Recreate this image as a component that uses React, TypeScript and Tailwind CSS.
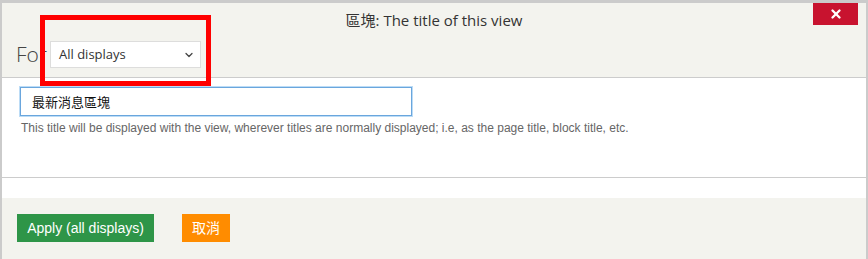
import { ChevronDown, X } from 'lucide-react'

// Views UI "title" override dialog
export default function App() {
  return (
    <div className="w-[868px] h-[259px] bg-[#cbcbcb] pt-[3px] pl-[2px] pr-[2px] overflow-hidden font-['Open_Sans',sans-serif]">
      <div className="relative h-full flex flex-col bg-white">
        {/* Header */}
        <div className="h-[75px] bg-[#f3f3ee] border-b border-[#cccccc] flex flex-col">
          <div className="h-[34px] grid grid-cols-[1fr_auto_1fr] items-start">
            <div />
            <h1 className="mt-[7px] leading-[20px] text-[15px] text-[#333333] font-['Open_Sans','Noto_Sans_CJK_TC',sans-serif]">
              區塊: The title of this view
            </h1>
            <div className="flex justify-end pr-[8px]">
              <button className="w-[45px] h-[22px] bg-[#c8132f] flex items-center justify-center text-white">
                <X size={14} strokeWidth={4} />
              </button>
            </div>
          </div>
          <div className="h-[40px] flex items-start pl-[14px] pt-[4px]">
            <span className="text-[21px] leading-[27px] font-light text-[#444444] w-[34px] overflow-hidden whitespace-nowrap">
              For
            </span>
            <div className="w-[151px] h-[27px] bg-white border border-[#dddddc] flex items-center justify-between pl-[8px] pr-[5px]">
              <span className="text-[13px] text-[#333333]">All displays</span>
              <ChevronDown size={12} strokeWidth={2.5} className="text-[#444444]" />
            </div>
          </div>
        </div>

        {/* Body */}
        <div className="h-[100px] px-[18px] pt-[9px] border-b border-[#cccccc] font-['Liberation_Sans',Arial,sans-serif]">
          <input
            readOnly
            value="最新消息區塊"
            className="w-[392px] h-[29px] pl-[11px] pr-[10px] border border-[#6aa6dd] shadow-[0_0_0_1px_#bcdcf6] text-[13px] text-[#111111] outline-none font-['Liberation_Sans','Noto_Sans_CJK_TC',sans-serif]"
          />
          <p className="mt-[5px] pl-px text-[12px] leading-[14px] text-[#666666]">
            This title will be displayed with the view, wherever titles are normally displayed; i.e, as the page title, block title, etc.
          </p>
        </div>
        <div className="h-[20px] bg-white" />

        {/* Footer */}
        <div className="flex-1 bg-[#f3f3ee] pt-[16px] pl-[15px] flex items-start gap-[28px] font-['Liberation_Sans','Noto_Sans_CJK_TC',sans-serif]">
          <button className="w-[137px] h-[28px] bg-[#2e9548] text-white text-[14px]">
            Apply (all displays)
          </button>
          <button className="w-[48px] h-[28px] bg-[#ff8c00] text-white text-[14px]">
            取消
          </button>
        </div>

        {/* Annotation highlight */}
        <div className="absolute left-[38px] top-[12px] w-[171px] h-[71px] border-[5px] border-[#ff0000]" />
      </div>
    </div>
  )
}
